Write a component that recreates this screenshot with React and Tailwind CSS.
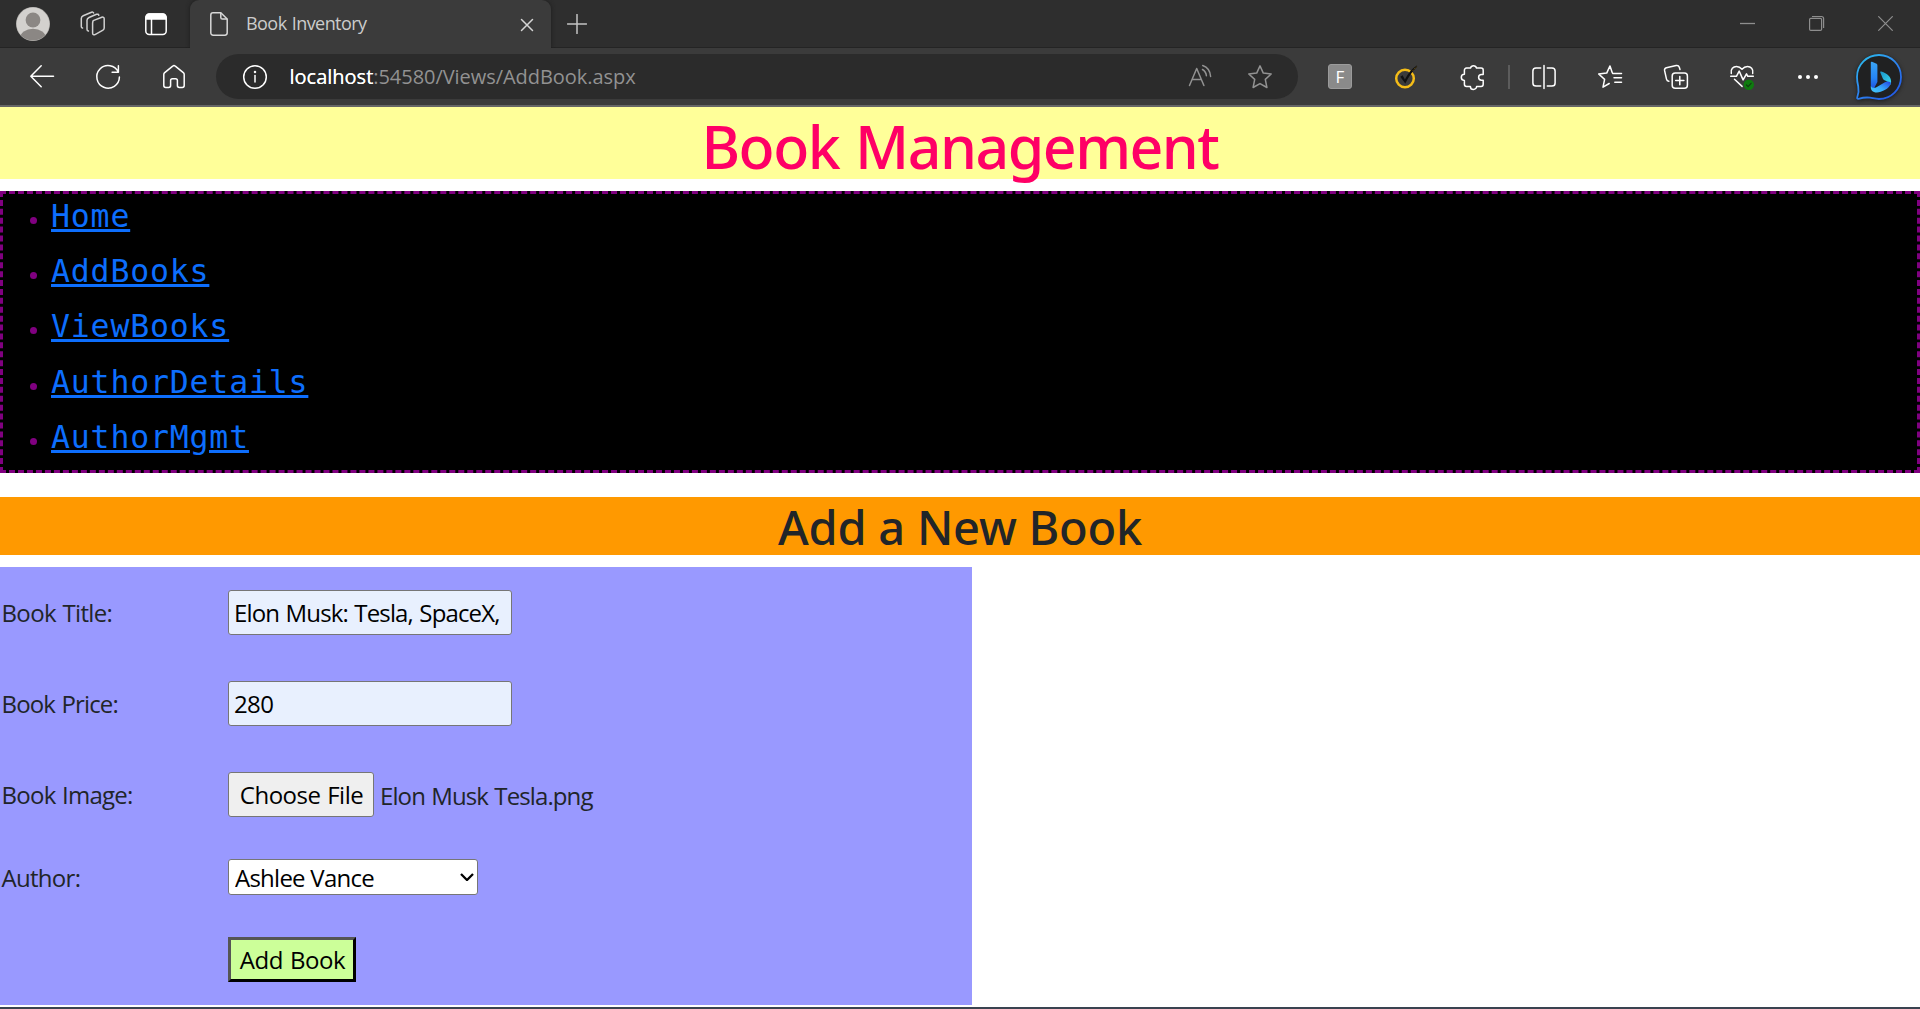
import React from "react";

const Icon = ({ children, className = "" }) => (
  <svg
    viewBox="0 0 24 24"
    className={`w-6 h-6 shrink-0 overflow-visible ${className}`}
    fill="none"
    stroke="currentColor"
    strokeWidth="1.5"
    strokeLinecap="round"
    strokeLinejoin="round"
  >
    {children}
  </svg>
);

const Cell = ({ children, className = "" }) => (
  <div className={`w-[66px] flex items-center justify-center shrink-0 ${className}`}>{children}</div>
);

function TabStrip() {
  return (
    <div className="h-12 flex items-center bg-[#2e2e2e] text-[#d0d0d0] border-b border-[#242424]">
      <svg viewBox="0 0 34 34" className="w-[34px] h-[34px] ml-4 shrink-0">
        <defs>
          <clipPath id="avatar">
            <circle cx="17" cy="17" r="16.6" />
          </clipPath>
        </defs>
        <circle cx="17" cy="17" r="17" fill="#a9a7a4" />
        <circle cx="17" cy="17" r="16.4" fill="#d3d1ce" />
        <g clipPath="url(#avatar)" fill="#8b8784">
          <circle cx="17" cy="13" r="7.4" />
          <ellipse cx="17" cy="31.5" rx="13" ry="9.8" />
        </g>
      </svg>
      <Icon className="ml-[31px]">
        <path d="M12.2 8.6 20.8 5.2c1.3-.5 2.4.2 2.4 1.5v9.4c0 .9-.4 1.6-1.2 2L14 22.600c-1.200.5-2.400-.2-2.400-1.400v-9.800c0-1.200.2-2 .6-2.800z" />
        <path d="M17.800 3.300c-.2-1-1.200-1.400-2.300-1L8 5.500C6.700 6.100 6 7 6 8.300v8.900c0 1 .5 1.600 1.400 1.800" />
        <path d="M12.600 .9c-.3-.8-1.200-1-2.100-.6L2.200 3.800C.9 4.400.3 5.200.3 6.500v7.900c0 .9.4 1.500 1.200 1.700" />
      </Icon>
      <Icon className="ml-[39px] text-white">
        <rect x="1.8" y="2" width="20.4" height="20.4" rx="3.5" />
        <path d="M2 7V5.500A3.500 3.500 0 0 1 5.500 2h13A3.500 3.500 0 0 1 22 5.500V7z" fill="currentColor" />
        <path d="M7.500 7v15" />
      </Icon>
      <div className="ml-[22px] w-[361px] h-12 -mb-px bg-[#3b3b3b] rounded-t-[9px] flex items-center shadow-[0_0_4px_#1c1c1c]">
        <svg viewBox="0 0 18 24" className="w-[18px] h-6 ml-[20px] shrink-0" fill="none" stroke="#d8d8d8" strokeWidth="1.5" strokeLinejoin="round">
          <path d="M3 .8h7.800L17.200 7v13.800c0 1.500-.9 2.400-2.400 2.400H3.200C1.700 23.200.8 22.300.8 20.800V3C.8 1.600 1.600.8 3 .8z" />
          <path d="M10.800.8v4.700c0 1 .6 1.600 1.600 1.600h4.800" />
        </svg>
        <span className="ml-[18px] -mt-[2px] w-[275px] text-[18px] leading-[24px] tracking-[-0.55px] [word-spacing:1px] text-[#cccccc] whitespace-nowrap">Book Inventory</span>
        <svg viewBox="0 0 12 12" className="w-3 h-3 shrink-0 overflow-visible mt-[1px]" stroke="#d5d5d5" strokeWidth="1.5" strokeLinecap="round">
          <path d="M.5.500l11 11M11.500.500l-11 11" />
        </svg>
      </div>
      <svg viewBox="0 0 20 20" className="w-5 h-5 ml-[16px] shrink-0" stroke="#c4c4c4" strokeWidth="1.5" strokeLinecap="round">
        <path d="M10 .5v19M.5 10h19" />
      </svg>
      <div className="ml-auto flex items-center w-[180px] shrink-0 text-[#8e8e8e]">
        <svg viewBox="0 0 15 15" className="w-[15px] h-[15px]" stroke="currentColor" strokeWidth="1.300">
          <path d="M0 7.500h15" />
        </svg>
        <svg viewBox="0 0 15 15" className="w-[15px] h-[15px] ml-[54px] overflow-visible" stroke="currentColor" strokeWidth="1.200" fill="none">
          <rect x=".6" y="2.400" width="12" height="12" rx="1.200" />
          <path d="M3 .5h9.500c1.300 0 2.100.8 2.100 2.100V12" />
        </svg>
        <svg viewBox="0 0 15 15" className="w-[15px] h-[15px] ml-[54px]" stroke="currentColor" strokeWidth="1.200">
          <path d="M.3.300l14.400 14.400M14.700.300.300 14.700" />
        </svg>
      </div>
    </div>
  );
}

function AddressBar() {
  return (
    <div className="w-[1082px] h-[45px] ml-[9px] rounded-full bg-[#2b2b2b] flex items-center shrink-0">
      <Icon className="ml-[27px] text-white">
        <circle cx="12" cy="12" r="11.300" />
        <path d="M12 10.500v6.500" />
        <circle cx="12" cy="7" r=".5" fill="currentColor" />
      </Icon>
      <div className="ml-[22.5px] mt-[1px] flex text-[20px] leading-[28px] whitespace-nowrap">
        <span className="text-white [text-shadow:0_0_0.5px_white]">localhost</span>
        <span className="text-[#929292] tracking-[-0.05px]">:54580/Views/AddBook.aspx</span>
      </div>
      <Icon className="ml-auto mr-[36px] text-[#929292]">
        <path d="M1.500 20.500 8.700 3.500l7.200 17M4.300 14.600h9" />
        <path d="M14.500 4.500c2.300 1.400 3.700 3.500 3.900 6.300M14.700 0.500c4.700 1.700 7.600 5.500 7.900 11" />
      </Icon>
      <Icon className="mr-[26px] text-[#929292]">
        <path d="M12 .9 15.300 8.100l7.900.9-5.900 5.400 1.600 8.100L12 18.600l-6.900 3.900 1.600-8.100L.8 9l7.900-.9z" />
      </Icon>
    </div>
  );
}

function BingLogo() {
  return (
    <svg viewBox="0 0 46 46" className="w-[46px] h-[46px] overflow-visible drop-shadow-[0_1px_2px_#1b1b1b]">
      <defs>
        <linearGradient id="ring" x1="0" y1="0" x2=".8" y2="1">
          <stop offset="0" stopColor="#29c5ee" />
          <stop offset=".45" stopColor="#2f8df0" />
          <stop offset="1" stopColor="#2359e6" />
        </linearGradient>
        <linearGradient id="stem" x1="0" y1="0" x2="0" y2="1">
          <stop offset="0" stopColor="#3aa5f5" />
          <stop offset=".6" stopColor="#2584f3" />
          <stop offset="1" stopColor="#1d4fe0" />
        </linearGradient>
        <linearGradient id="bowl" x1="0" y1="1" x2="1" y2=".2">
          <stop offset="0" stopColor="#43c8fa" />
          <stop offset=".5" stopColor="#37aaf8" />
          <stop offset="1" stopColor="#2450e4" />
        </linearGradient>
        <linearGradient id="wing" x1="0" y1="0" x2="1" y2="1">
          <stop offset="0" stopColor="#1994c8" />
          <stop offset="1" stopColor="#3bdcf0" />
        </linearGradient>
      </defs>
      <path
        d="M23 1C35.200 1 45 10.800 45 23s-9.800 22-22 22c-3.500 0-5.800-.8-9-1.300-3.700-.6-7.500 0-11.600 1.100-1 .2-1.500-.5-1.200-1.300C2.600 39.500 3 36 2.200 32.200 1.400 29 1 26.300 1 23 1 10.800 10.800 1 23 1z"
        fill="#202122"
        stroke="url(#ring)"
        strokeWidth="1.800"
      />
      <path d="M14.800 8.600c0-.8.5-1.100 1.200-.8l4 1.800c.9.4 1.400 1 1.400 2V28l-3.900 7.200c-1.700-.9-2.700-2.500-2.700-4.700z" fill="url(#stem)" />
      <path d="M24.300 18.500c-.3-.8.200-1.300 1-1 6 2 9.800 5 9.800 10.200 0 1.500-.5 2.800-1.300 3.800-.4-2.500-2.200-4-5.200-5.200-.9-.4-1.400-.8-1.800-1.700z" fill="url(#wing)" />
      <path d="M14.900 31.500c.5 2.500 3.300 3 6 1.400l8-4.700c3.200-1.800 5.800-.2 6 .8-.5 3-3 5.300-6.200 7.100-3 1.700-5.200 2.400-7.800 2.400-4.200 0-6.800-2.600-6-7z" fill="url(#bowl)" />
    </svg>
  );
}

function Toolbar() {
  return (
    <div className="h-[57px] flex items-center bg-[#3b3b3b] text-white">
      <Cell className="ml-[9px]">
        <Icon><path d="M23.500 11.300H.8M11.200.8.800 11.300l10.400 10.400" /></Icon>
      </Cell>
      <Cell>
        <Icon><path d="M22.400 7.200A11.300 11.300 0 1 0 23.400 12M22.400.7v6.500h-6.300" /></Icon>
      </Cell>
      <Cell>
        <Icon><path d="M1.800 9.500c0-.8.300-1.300.9-1.800l8-6.600c.8-.7 1.800-.7 2.600 0l8 6.600c.6.500.9 1 .9 1.800v11c0 1.200-.7 1.900-1.900 1.900h-3c-1.200 0-1.900-.7-1.900-1.900v-5c0-1.200-.6-1.800-1.800-1.800h-3.200c-1.200 0-1.800.6-1.800 1.800v5c0 1.200-.7 1.900-1.900 1.900h-3c-1.200 0-1.900-.7-1.900-1.900z" /></Icon>
      </Cell>
      <AddressBar />
      <Cell className="ml-[9px]">
        <div className="w-6 h-[25px] rounded-[3px] bg-[#8a8a8a] border border-[#9b9b9b] text-white text-[17px] font-medium leading-[23px] text-center">F</div>
      </Cell>
      <Cell>
        <svg viewBox="0 0 24 24" className="w-6 h-6 overflow-visible">
          <circle cx="11" cy="13.500" r="8.800" fill="none" stroke="#f5bd18" strokeWidth="2.500" />
          <path d="M6.300 11.800 8.600 10.300l2.300 4.200C14 8.500 17.500 4 22.800.6 23.500 1 23 2 22.500 2.600 18.300 6.500 14.500 12 11.300 18.600z" fill="#111" />
          <path d="M18.900 5.600c1.400-1.700 2.600-2.900 4-4" stroke="#8a6b12" strokeWidth="1" strokeDasharray="1 1" />
        </svg>
      </Cell>
      <Cell>
        <Icon className="ml-[2px]"><path d="M9.500 3.100a3.100 3.100 0 0 1 6 0h4.600c1.300 0 2.100.8 2.100 2.100v4.200h-1.700a2.900 2.900 0 0 0 0 5.800h1.700v4.100c0 1.300-.8 2.100-2.100 2.100h-4.500a3.100 3.100 0 0 1-6.200 0H5.500c-1.300 0-2.100-.8-2.100-2.100v-3.900a3.100 3.100 0 0 1 0-6.200V5.200c0-1.300.8-2.100 2.100-2.100z" /></Icon>
      </Cell>
      <div className="w-[2px] h-6 ml-[3px] mr-[1px] bg-[#5c5c5c] shrink-0" />
      <Cell>
        <Icon><path d="M8.700 3H4C2 3 .9 4.100.9 6.100v11.800C.9 19.900 2 21 4 21h4.700M15.300 3H20c2 0 3.100 1.100 3.100 3.100v11.800c0 2-1.100 3.100-3.100 3.100h-4.700M12 .5v23" /></Icon>
      </Cell>
      <Cell>
        <Icon>
          <path d="M14.200 7.500 12 .9 8.700 8.100l-8 .9 5.900 5.400-1.600 7.800 6.200-3.700M15 8.400h8.500M16 12.800h7.500M16.800 17.300h6.700M14.200 7.500l.5.900" />
        </Icon>
      </Cell>
      <Cell>
        <Icon>
          <rect x="8.200" y="8" width="15.200" height="15.200" rx="3" />
          <path d="M15.800 11.500v8.200M11.700 15.600h8.200M4.800 16.300c-1.300-.2-2-.9-2.300-2.200L.6 5.700C.3 4.200 1 3.100 2.400 2.700L12.200.5c1.500-.3 2.600.3 3.100 1.800l.7 2.200" />
        </Icon>
      </Cell>
      <Cell>
        <Icon>
          <path d="M.7 11.300h5.700l2.800-5.200 3.900 8.800 3.400-6 1.300 2.400h5.500M1.300 8.400C.3 3.900 3.300 1.500 6.500 1.500c2.300 0 4 1 5.500 2.800 1.500-1.800 3.200-2.800 5.500-2.800 3.200 0 6.200 2.400 5.200 6.900M4.500 14.200l7.600 7.200" />
          <circle cx="18.800" cy="19.800" r="5.200" fill="#0f7b0f" stroke="none" />
          <path d="M16.500 20l1.600 1.600 3-3.300" stroke="#123d12" strokeWidth="1.200" />
        </Icon>
      </Cell>
      <Cell>
        <Icon>
          <g fill="currentColor" stroke="none">
            <circle cx="4" cy="12" r="2" />
            <circle cx="12" cy="12" r="2" />
            <circle cx="20" cy="12" r="2" />
          </g>
        </Icon>
      </Cell>
      <div className="w-[76px] flex justify-center shrink-0"><BingLogo /></div>
    </div>
  );
}

const links = ["Home", "AddBooks", "ViewBooks", "AuthorDetails", "AuthorMgmt"];

function Nav() {
  return (
    <ul className="mt-3 h-[282px] bg-black border-[3px] border-dashed border-[#800080]">
      {links.map((name) => (
        <li key={name} className="h-[55.2px] flex items-start">
          <span className="w-[7px] h-[7px] mt-[23px] ml-[27px] rounded-full bg-[#800080] shrink-0" />
          <a
            href="#"
            className="ml-[14px] font-['DejaVu_Sans_Mono',monospace] text-[31.5px] leading-[44px] tracking-[0.83px] text-[#0d6efd] underline decoration-[3px] underline-offset-[2px]"
          >
            {name}
          </a>
        </li>
      ))}
    </ul>
  );
}

const Row = ({ label, spacing, children, className }) => (
  <div className={`flex items-center ${className}`}>
    <span className={`w-[227px] shrink-0 whitespace-nowrap text-[#212529] ${spacing}`}>{label}</span>
    {children}
  </div>
);

function BookForm() {
  return (
    <form className="mt-3 w-[972px] h-[438px] pl-[1px] pt-[23px] bg-[#9999ff] text-[24px] leading-[36px]">
      <Row label="Book Title:" spacing="pl-[0.5px] tracking-[-0.65px] [word-spacing:1px]" className="h-[45px]">
        <input
          readOnly
          value="Elon Musk: Tesla, SpaceX,"
          className="w-[284px] h-[45px] px-[5px] rounded-[3px] border border-[#767676] bg-[#e8f0fe] text-black tracking-[-0.85px] [word-spacing:1px]"
        />
      </Row>
      <Row label="Book Price:" spacing="pl-[0.5px] tracking-[-0.85px] [word-spacing:1px]" className="h-[45px] mt-[46px]">
        <input
          readOnly
          value="280"
          className="w-[284px] h-[45px] px-[5px] rounded-[3px] border border-[#767676] bg-[#e8f0fe] text-black tracking-[-0.6px]"
        />
      </Row>
      <Row label="Book Image:" spacing="pl-[0.5px] tracking-[-0.75px] [word-spacing:1px]" className="h-[45px] mt-[46px]">
        <button type="button" className="w-[146px] h-[45px] rounded-[3px] border border-[#767676] bg-[#efefef] text-black tracking-[-0.5px] [word-spacing:1px] pl-[1px] pt-[1px] whitespace-nowrap">
          Choose File
        </button>
        <span className="ml-[6px] mt-[2px] tracking-[-0.9px] [word-spacing:1px] text-[#212529]">Elon Musk Tesla.png</span>
      </Row>
      <Row label="Author:" spacing="pl-[0.5px] pt-[2px] tracking-[-0.7px]" className="h-[36px] mt-[42px]">
        <div className="relative w-[250px] h-[36px]">
          <select className="appearance-none w-full h-full pt-[2px] pl-[6px] rounded-[3px] border border-[#767676] bg-white text-black leading-[32px] tracking-[-0.75px]">
            <option>Ashlee Vance</option>
          </select>
          <svg viewBox="0 0 14 8" className="absolute right-[4px] top-[14px] w-[14px] h-2" fill="none" stroke="#000" strokeWidth="2.300">
            <path d="M1 1l6 6 6-6" />
          </svg>
        </div>
      </Row>
      <Row label="" className="h-[45px] mt-[42px]">
        <button
          type="button"
          className="w-[128px] h-[45px] border-[3px] border-t-[#555] border-l-[#555] border-r-black border-b-black bg-[#ccff99] text-black tracking-[-0.4px] [word-spacing:1px] pl-[1px] whitespace-nowrap leading-[36px]"
        >
          Add Book
        </button>
      </Row>
    </form>
  );
}

export default function App() {
  return (
    <div className="w-[1920px] h-[1009px] overflow-hidden bg-white font-['Open_Sans',sans-serif] flex flex-col">
      <TabStrip />
      <Toolbar />
      <div className="h-[2px] bg-[#666666] shrink-0" />
      <h1 className="h-[72px] bg-[#ffff99] text-center text-[#ff0066] font-['Noto_Sans',sans-serif] font-medium text-[59px] leading-[78px] tracking-[-1.5px] [word-spacing:2px] shrink-0">
        Book Management
      </h1>
      <Nav />
      <h2 className="mt-6 h-[58px] bg-[#ff9900] text-center text-[#212529] font-['Noto_Sans',sans-serif] font-medium text-[47px] leading-[60px] tracking-[-0.25px] shrink-0">
        Add a New Book
      </h2>
      <BookForm />
      <div className="mt-[2px] h-[2px] bg-[#3a4350] shrink-0" />
    </div>
  );
}
